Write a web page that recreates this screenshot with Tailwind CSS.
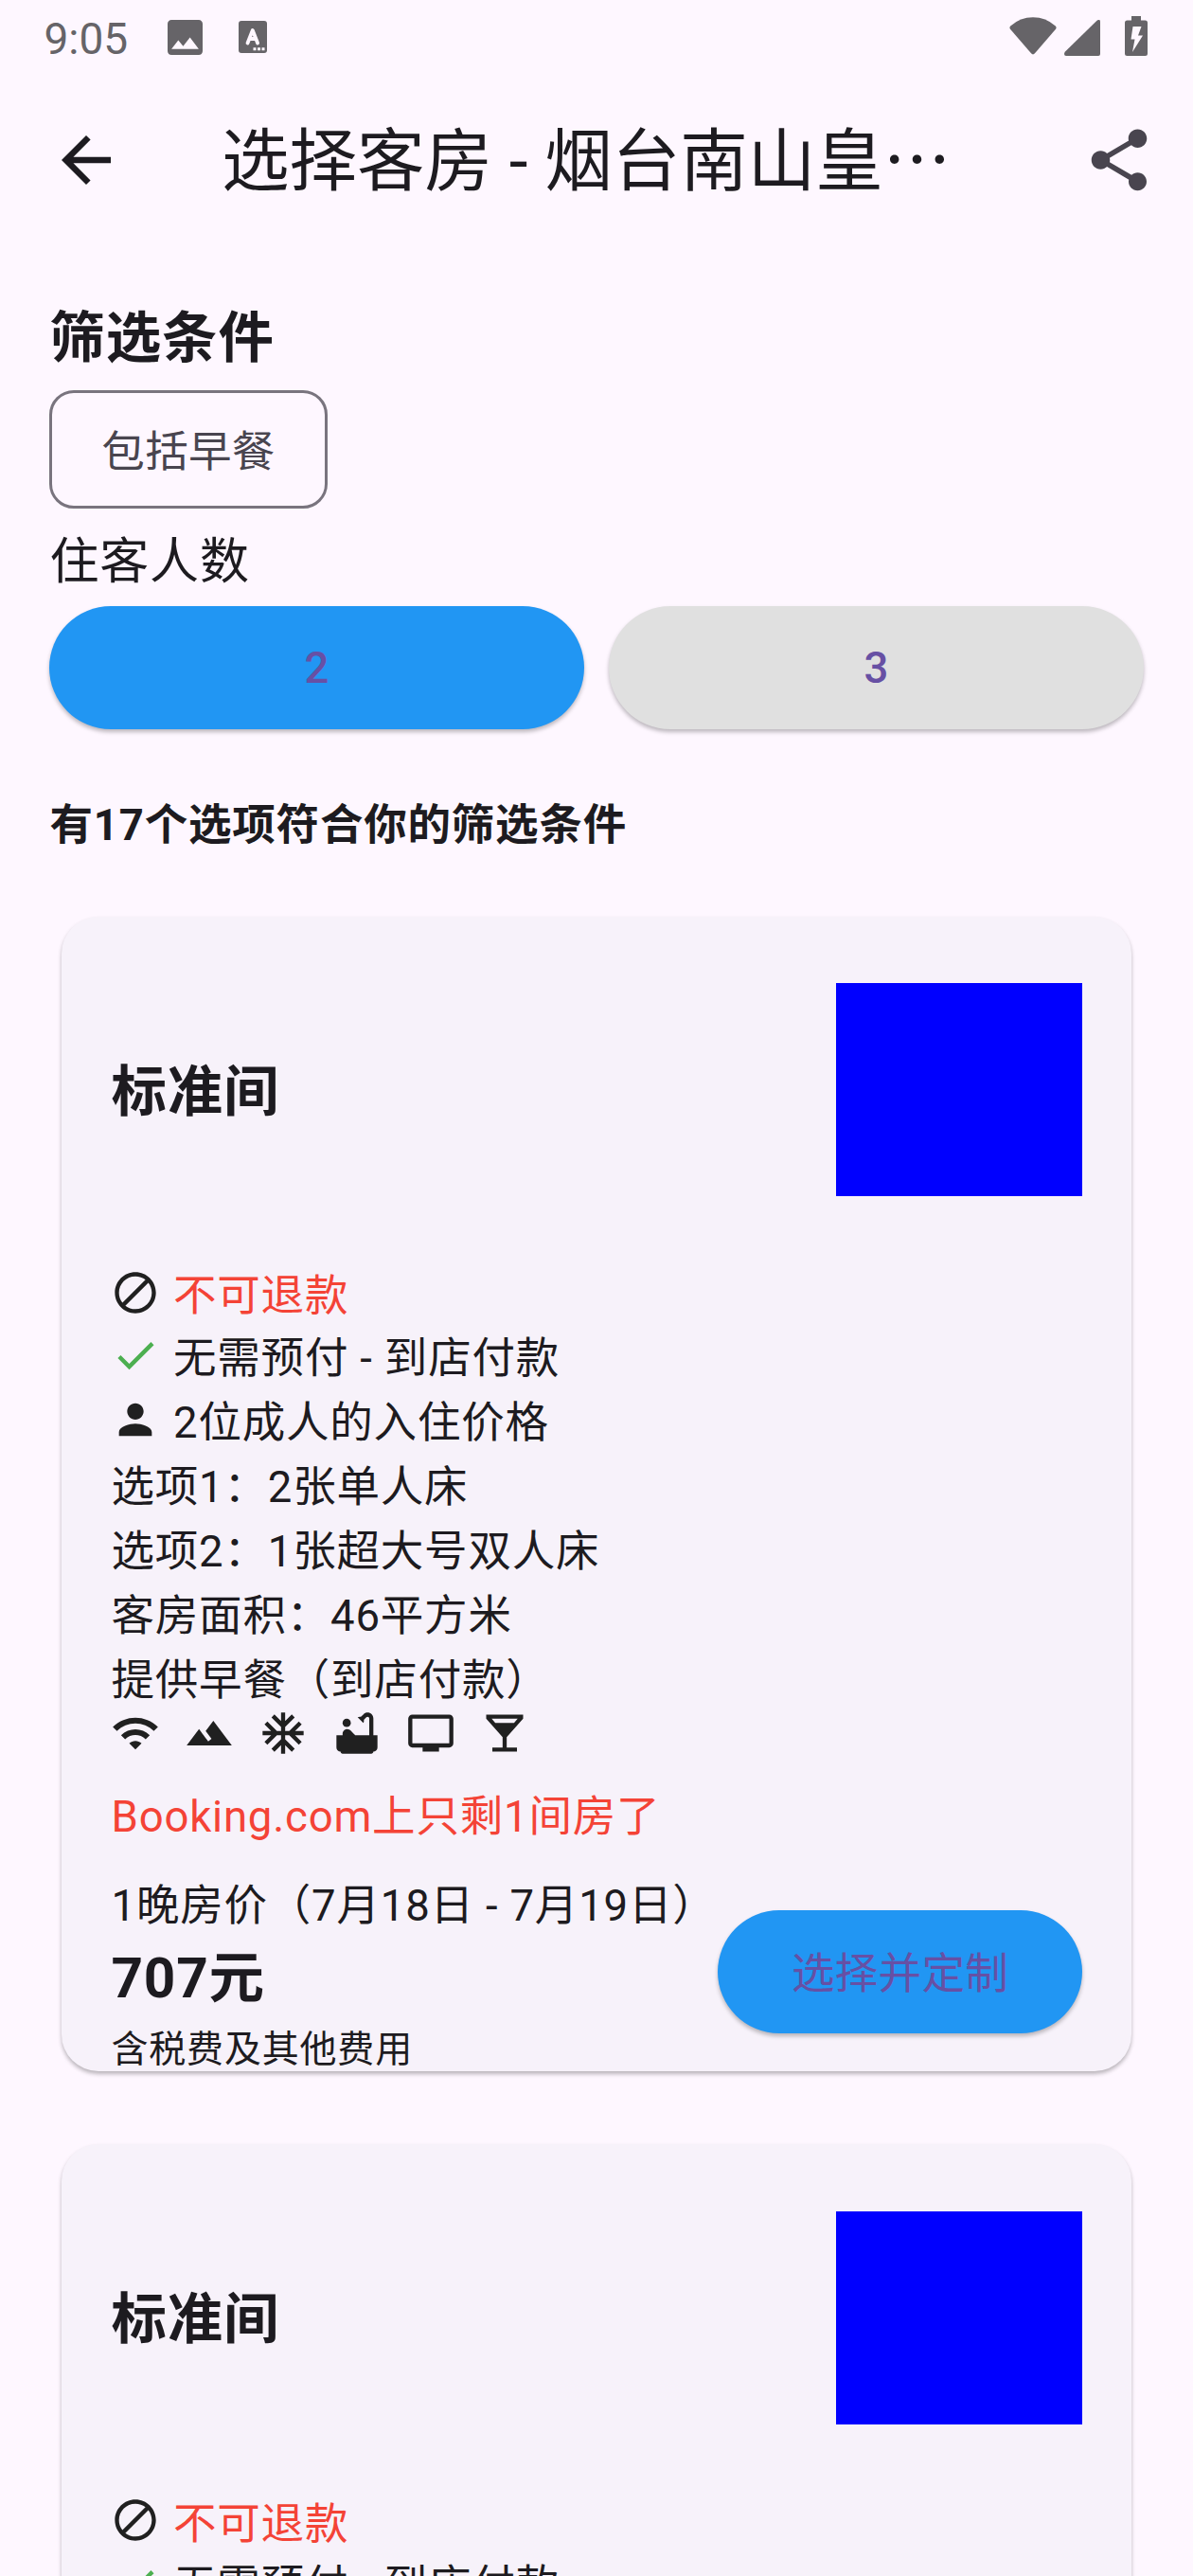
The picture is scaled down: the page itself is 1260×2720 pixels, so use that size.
<!DOCTYPE html>
<html lang="zh-CN">
<head>
<meta charset="utf-8">
<title>选择客房</title>
<script src="https://cdn.jsdelivr.net/npm/@tailwindcss/browser@4"></script>
</head>
<body class="bg-[#fef7ff]">
<div class="h-[2720px] w-[1260px] overflow-hidden bg-[#fef7ff] font-[Roboto,'Noto_Sans_CJK_SC',sans-serif] text-[45.5px] tracking-[0.81px] text-[#1d1b20]">
<svg class="hidden">
  <symbol id="ban" viewBox="0 0 24 24"><path d="M12 2C6.48 2 2 6.48 2 12s4.48 10 10 10 10-4.48 10-10S17.52 2 12 2zM4 12c0-4.42 3.58-8 8-8 1.85 0 3.55.63 4.9 1.69L5.69 16.9C4.63 15.55 4 13.85 4 12zm8 8c-1.85 0-3.55-.63-4.9-1.69L18.31 7.1C19.37 8.45 20 10.15 20 12c0 4.42-3.58 8-8 8z"/></symbol>
  <symbol id="check" viewBox="0 0 24 24"><path d="M9 16.17 4.83 12l-1.42 1.41L9 19 21 7l-1.41-1.41z"/></symbol>
  <symbol id="person" viewBox="0 0 24 24"><path d="M12 12c2.21 0 4-1.79 4-4s-1.79-4-4-4-4 1.79-4 4 1.79 4 4 4zm0 2c-2.67 0-8 1.34-8 4v2h16v-2c0-2.66-5.33-4-8-4z"/></symbol>
  <symbol id="wifi" viewBox="0 0 24 24"><path d="m1 9 2 2c4.97-4.97 13.03-4.97 18 0l2-2C16.93 2.93 7.08 2.93 1 9zm8 8 3 3 3-3c-1.65-1.66-4.34-1.66-6 0zm-4-4 2 2c2.76-2.76 7.24-2.76 10 0l2-2C15.14 9.14 8.87 9.14 5 13z"/></symbol>
  <symbol id="terrain" viewBox="0 0 24 24"><path d="m14 6-3.75 5 2.85 3.8-1.6 1.2C9.81 13.75 7 10 7 10l-6 8h22L14 6z"/></symbol>
  <symbol id="snow" viewBox="0 0 24 24"><path d="M22 11h-4.17l3.24-3.24-1.41-1.42L15 11h-2V9l4.66-4.66-1.42-1.41L13 6.17V2h-2v4.17L7.76 2.93 6.34 4.34 11 9v2H9L4.34 6.34 2.93 7.76 6.17 11H2v2h4.17l-3.24 3.24 1.41 1.42L9 13h2v2l-4.66 4.66 1.42 1.41L11 17.83V22h2v-4.17l3.24 3.24 1.42-1.41L13 15v-2h2l4.66 4.66 1.41-1.42L17.83 13H22z"/></symbol>
  <symbol id="bath" viewBox="0 0 24 24"><circle cx="7" cy="7" r="2"/><path d="M20 13V4.83C20 3.27 18.73 2 17.17 2c-.75 0-1.47.3-2 .83l-1.25 1.25c-.16-.05-.33-.08-.51-.08-.4 0-.77.12-1.08.32l2.76 2.76c.2-.31.32-.68.32-1.08 0-.18-.03-.34-.07-.51l1.25-1.25c.15-.15.36-.24.58-.24.46 0 .83.37.83.83V13h-6.85c-.3-.21-.57-.45-.82-.72l-1.4-1.55c-.19-.21-.43-.38-.69-.5-.31-.15-.65-.23-1-.23C6 10.01 5 11.01 5 12.25V13H2v6c0 1.1.9 2 2 2 0 .55.45 1 1 1h14c.55 0 1-.45 1-1 1.1 0 2-.9 2-2v-6h-2z"/></symbol>
  <symbol id="tv" viewBox="0 0 24 24"><path d="M21 3H3c-1.1 0-2 .9-2 2v12c0 1.1.9 2 2 2h5v2h8v-2h5c1.1 0 1.99-.9 1.99-2L23 5c0-1.1-.9-2-2-2zm0 14H3V5h18v12z"/></symbol>
  <symbol id="bar" viewBox="0 0 24 24"><path d="M21 5V3H3v2l8 9v5H6v2h12v-2h-5v-5l8-9zM7.43 7 5.66 5h12.69l-1.78 2H7.43z"/></symbol>
</svg>

<div class="flex h-[78px] items-start justify-between pl-[46.5px] pr-[48px] text-[#666468]">
  <div class="flex items-start">
    <span class="mt-[14px] w-[130px] text-[46px] leading-[54px] tracking-normal">9:05</span>
    <svg class="mt-[20.5px] h-[37px] w-[37px]" viewBox="3 3 18 18" fill="currentColor"><path d="M21 19V5c0-1.100-.9-2-2-2H5c-1.100 0-2 .9-2 2v14c0 1.100.9 2 2 2h14c1.100 0 2-.9 2-2zM8.500 13.500l2.500 3.010L14.500 12l4.500 6H5l3.500-4.500z"/></svg>
    <svg class="ml-[38.500px] mt-[22px] h-[34px] w-[30px]" viewBox="0 0 30 34"><rect width="30" height="34" rx="3" fill="currentColor"/><path d="M9.500 23.500 14.800 10 20.100 23.500M11.500 19H18" fill="none" stroke="#fef7ff" stroke-width="3.800" stroke-linejoin="round" stroke-linecap="round"/><path d="M15.500 28.300h3v3h-3zM20 28.300h3v3h-3zM24.500 28.300h3v3h-3z" fill="#fef7ff"/></svg>
  </div>
  <div class="flex items-start">
    <svg class="mt-[18px] h-[40px] w-[50px]" viewBox="0 0 50 40" fill="currentColor"><path d="M1.200 9.500Q11.500.3 25 .3T48.800 9.500Q50.200 11 49 12.700L27 38.300Q25 40.600 23 38.300L1 12.700Q-.2 11 1.200 9.500z"/></svg>
    <svg class="ml-[8px] mt-[21px] h-[38px] w-[38px]" viewBox="0 0 38 38" fill="currentColor"><path d="M34.500.8Q38-1.500 38 2V36q0 2-2 2H2q-2 0-2-2 0-1.500 1-2.500z"/></svg>
    <svg class="ml-[26px] mt-[17px] h-[42px] w-[24px]" viewBox="0 0 24 42"><path d="M7 0h10v4.500h4.500Q24 4.500 24 7v32.500Q24 42 21.500 42h-19Q0 42 0 39.500V7Q0 4.500 2.500 4.500H7z" fill="currentColor"/><path d="M8.500 11h9L14 20.500h5L8 38l2.500-13.500h-4z" fill="#fef7ff"/></svg>
  </div>
</div>

<header class="flex h-[182px] items-center pl-[52px] pr-[39px]">
  <svg class="h-[78px] w-[78px]" viewBox="0 0 24 24" fill="currentColor"><path d="M20 11H7.830l5.590-5.590L12 4l-8 8 8 8 1.410-1.410L7.830 13H20v-2z"/></svg>
  <h1 class="ml-[104px] flex-1 whitespace-nowrap pb-[4px] text-[71.500px] leading-[90px] tracking-normal">选择客房 - 烟台南山皇<span class="font-['Noto_Sans_CJK_SC']">…</span></h1>
  <svg class="h-[78px] w-[78px] text-[#49454f]" viewBox="0 0 24 24" fill="currentColor"><path d="M18 16.080c-.76 0-1.440.3-1.960.77L8.910 12.700c.05-.23.09-.46.09-.7s-.04-.47-.09-.7l7.050-4.110c.54.5 1.250.81 2.040.81 1.660 0 3-1.340 3-3s-1.340-3-3-3-3 1.340-3 3c0 .24.04.47.09.7L8.040 9.810C7.500 9.310 6.790 9 6 9c-1.660 0-3 1.340-3 3s1.340 3 3 3c.79 0 1.500-.31 2.040-.81l7.120 4.160c-.05.21-.08.43-.08.65 0 1.610 1.310 2.920 2.920 2.920s2.920-1.310 2.920-2.920-1.310-2.920-2.920-2.920z"/></svg>
</header>

<section class="px-[52px] pt-[52px]">
  <h2 class="h-[84px] pl-[0.5px] pt-[3px] text-[58.500px] font-bold leading-[84px]">筛选条件</h2>
  <div class="mt-[16px] flex h-[125px] w-[294px] items-center justify-center rounded-[26px] border-[3.250px] border-[#79747e] pt-[8px] text-[#49454f] tracking-[0.325px]">包括早餐</div>
  <p class="mt-[16px] h-[76px] pl-[0.5px] pt-[3px] text-[52px] leading-[76px]">住客人数</p>
  <div class="mt-[11px] flex gap-[26px] font-medium text-[#6750a4] tracking-[0.325px]">
    <button class="h-[130px] flex-1 rounded-full bg-[#2196f3] pt-[3px] shadow-[0_3px_4px_rgba(0,0,0,0.26)]">2</button>
    <button class="h-[130px] flex-1 rounded-full bg-[#e0e0e0] pt-[3px] shadow-[0_3px_4px_rgba(0,0,0,0.26)]">3</button>
  </div>
  <h3 class="mt-[66px] h-[68px] pl-[0.5px] pt-[2px] font-bold leading-[68px]">有17个选项符合你的筛选条件</h3>
</section>

<main class="flex flex-col gap-[77px] px-[65px] pt-[63.500px]">
  <article class="h-[1219.5px] shrink-0 rounded-[39px] bg-[#f7f2fa] px-[52px] pt-[70.500px] leading-[68px] shadow-[0_3px_4px_rgba(0,0,0,0.27)]">
    <div class="flex h-[225px] items-center justify-between">
      <h2 class="pl-[0.5px] pt-[4px] text-[58.500px] font-bold">标准间</h2>
      <div class="h-[225px] w-[260px] bg-[#0000ff]"></div>
    </div>
    <div class="mt-[69px] flex h-[65px] items-center gap-[14px] text-[#f44336]"><svg class="h-[52px] w-[52px] fill-[#202020]"><use href="#ban"/></svg><span class="pt-[9px]">不可退款</span></div>
    <div class="flex h-[68px] items-center gap-[14px]"><svg class="h-[52px] w-[52px] fill-[#4caf50]"><use href="#check"/></svg><span class="pt-[7px]">无需预付 - 到店付款</span></div>
    <div class="flex h-[68px] items-center gap-[14px]"><svg class="h-[52px] w-[52px] fill-[#202020]"><use href="#person"/></svg><span class="pt-[7px]">2位成人的入住价格</span></div>
    <div class="h-[272px] pl-[0.5px] pt-[3.5px]">
      <p>选项1：2张单人床</p>
      <p>选项2：1张超大号双人床</p>
      <p>客房面积：46平方米</p>
      <p>提供早餐（到店付款）</p>
    </div>
    <div class="-mt-[1px] flex h-[52px] gap-[26px] fill-[#202020]">
      <svg class="h-[52px] w-[52px]"><use href="#wifi"/></svg>
      <svg class="h-[52px] w-[52px]"><use href="#terrain"/></svg>
      <svg class="h-[52px] w-[52px]"><use href="#snow"/></svg>
      <svg class="h-[52px] w-[52px]"><use href="#bath"/></svg>
      <svg class="h-[52px] w-[52px]"><use href="#tv"/></svg>
      <svg class="h-[52px] w-[52px]"><use href="#bar"/></svg>
    </div>
    <p class="mt-[29px] pl-[0.5px] text-[#f44336]">Booking.com上只剩1间房了</p>
    <div class="mt-[24px] flex h-[209px] items-center justify-between">
      <div class="h-[209px] whitespace-nowrap pl-[0.5px] pt-[2px]">
        <p>1晚房价（7月18日 - 7月19日）</p>
        <p class="h-[84px] text-[58.500px] font-bold leading-[84px]">707元</p>
        <p class="h-[57px] pt-[5px] text-[39px] leading-[57px]">含税费及其他费用</p>
      </div>
      <button class="h-[130px] w-[385px] shrink-0 rounded-full bg-[#2196f3] pt-[6px] tracking-[0.325px] text-[#6750a4] shadow-[0_3px_4px_rgba(0,0,0,0.26)]">选择并定制</button>
    </div>
  </article>

  <article class="h-[1219.5px] shrink-0 rounded-[39px] bg-[#f7f2fa] px-[52px] pt-[70.500px] leading-[68px] shadow-[0_3px_4px_rgba(0,0,0,0.27)]">
    <div class="flex h-[225px] items-center justify-between">
      <h2 class="pl-[0.5px] pt-[4px] text-[58.500px] font-bold">标准间</h2>
      <div class="h-[225px] w-[260px] bg-[#0000ff]"></div>
    </div>
    <div class="mt-[69px] flex h-[65px] items-center gap-[14px] text-[#f44336]"><svg class="h-[52px] w-[52px] fill-[#202020]"><use href="#ban"/></svg><span class="pt-[9px]">不可退款</span></div>
    <div class="flex h-[68px] items-center gap-[14px]"><svg class="h-[52px] w-[52px] fill-[#4caf50]"><use href="#check"/></svg><span class="pt-[7px]">无需预付 - 到店付款</span></div>
  </article>
</main>
</div>
</body>
</html>
